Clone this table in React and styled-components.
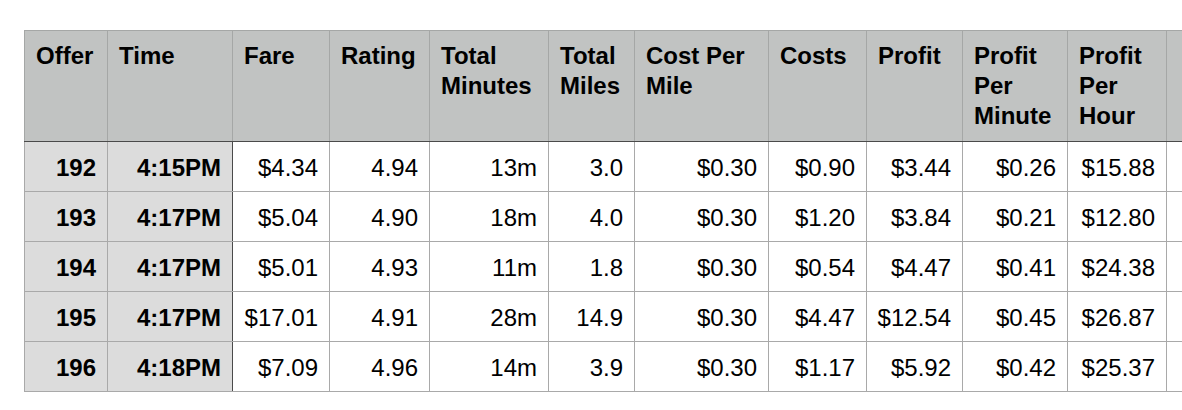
import React from 'react'
import styled, { createGlobalStyle } from 'styled-components'

const GlobalStyle = createGlobalStyle`
  html, body {
    margin: 0;
    background: #ffffff;
    font-family: "Liberation Sans", Arial, Helvetica, sans-serif;
    overflow: hidden;
  }
`

const columns = [
  { key: 'offer', title: 'Offer', width: 83, frozen: true },
  { key: 'time', title: 'Time', width: 125, frozen: true },
  { key: 'fare', title: 'Fare', width: 97 },
  { key: 'rating', title: 'Rating', width: 100 },
  { key: 'minutes', title: 'Total Minutes', width: 119 },
  { key: 'miles', title: 'Total Miles', width: 86 },
  { key: 'cpm', title: 'Cost Per Mile', width: 134 },
  { key: 'costs', title: 'Costs', width: 98 },
  { key: 'profit', title: 'Profit', width: 96 },
  { key: 'ppm', title: 'Profit Per Minute', width: 105 },
  { key: 'pph', title: 'Profit Per Hour', width: 99 },
  { key: 'extra', title: '', width: 60 },
]

const rows = [
  ['192', '4:15PM', '$4.34', '4.94', '13m', '3.0', '$0.30', '$0.90', '$3.44', '$0.26', '$15.88', ''],
  ['193', '4:17PM', '$5.04', '4.90', '18m', '4.0', '$0.30', '$1.20', '$3.84', '$0.21', '$12.80', ''],
  ['194', '4:17PM', '$5.01', '4.93', '11m', '1.8', '$0.30', '$0.54', '$4.47', '$0.41', '$24.38', ''],
  ['195', '4:17PM', '$17.01', '4.91', '28m', '14.9', '$0.30', '$4.47', '$12.54', '$0.45', '$26.87', ''],
  ['196', '4:18PM', '$7.09', '4.96', '14m', '3.9', '$0.30', '$1.17', '$5.92', '$0.42', '$25.37', ''],
]

export default function App() {
  return (
    <Page>
      <GlobalStyle />
      <Sheet>
        <colgroup>
          {columns.map((c) => (
            <col key={c.key} style={{ width: c.width }} />
          ))}
        </colgroup>
        <thead>
          <tr>
            {columns.map((c) => (
              <HeadCell key={c.key}>{c.title}</HeadCell>
            ))}
          </tr>
        </thead>
        <tbody>
          {rows.map((row) => (
            <tr key={row[0]}>
              {row.map((value, i) => (
                <Cell key={columns[i].key} $frozen={columns[i].frozen} $split={i === 1}>
                  {value}
                </Cell>
              ))}
            </tr>
          ))}
        </tbody>
      </Sheet>
    </Page>
  )
}

const Page = styled.div`
  padding: 30px 0 0 24px;
  width: 1182px;
  height: 410px;
  box-sizing: border-box;
  overflow: hidden;
`

const Sheet = styled.table`
  border-collapse: collapse;
  table-layout: fixed;
  width: 1202px;
  font-size: 24px;
  color: #000;
`

const HeadCell = styled.th`
  height: 111px;
  box-sizing: border-box;
  padding: 10px 8px 0 11px;
  vertical-align: top;
  text-align: left;
  font-weight: bold;
  line-height: 30px;
  background: #c1c3c2;
  border: 1px solid #a5a7a6;
  border-bottom: 1px solid #4a4a4a;
`

const Cell = styled.td`
  height: 50px;
  box-sizing: border-box;
  padding: 2px 11px 0 8px;
  vertical-align: middle;
  text-align: right;
  line-height: 30px;
  white-space: nowrap;
  font-weight: ${(p) => (p.$frozen ? 'bold' : 'normal')};
  background: ${(p) => (p.$frozen ? '#dcdcdc' : '#ffffff')};
  border: 1px solid #a9a9a9;
  border-right: 1px solid ${(p) => (p.$split ? '#4a4a4a' : '#a9a9a9')};
`
